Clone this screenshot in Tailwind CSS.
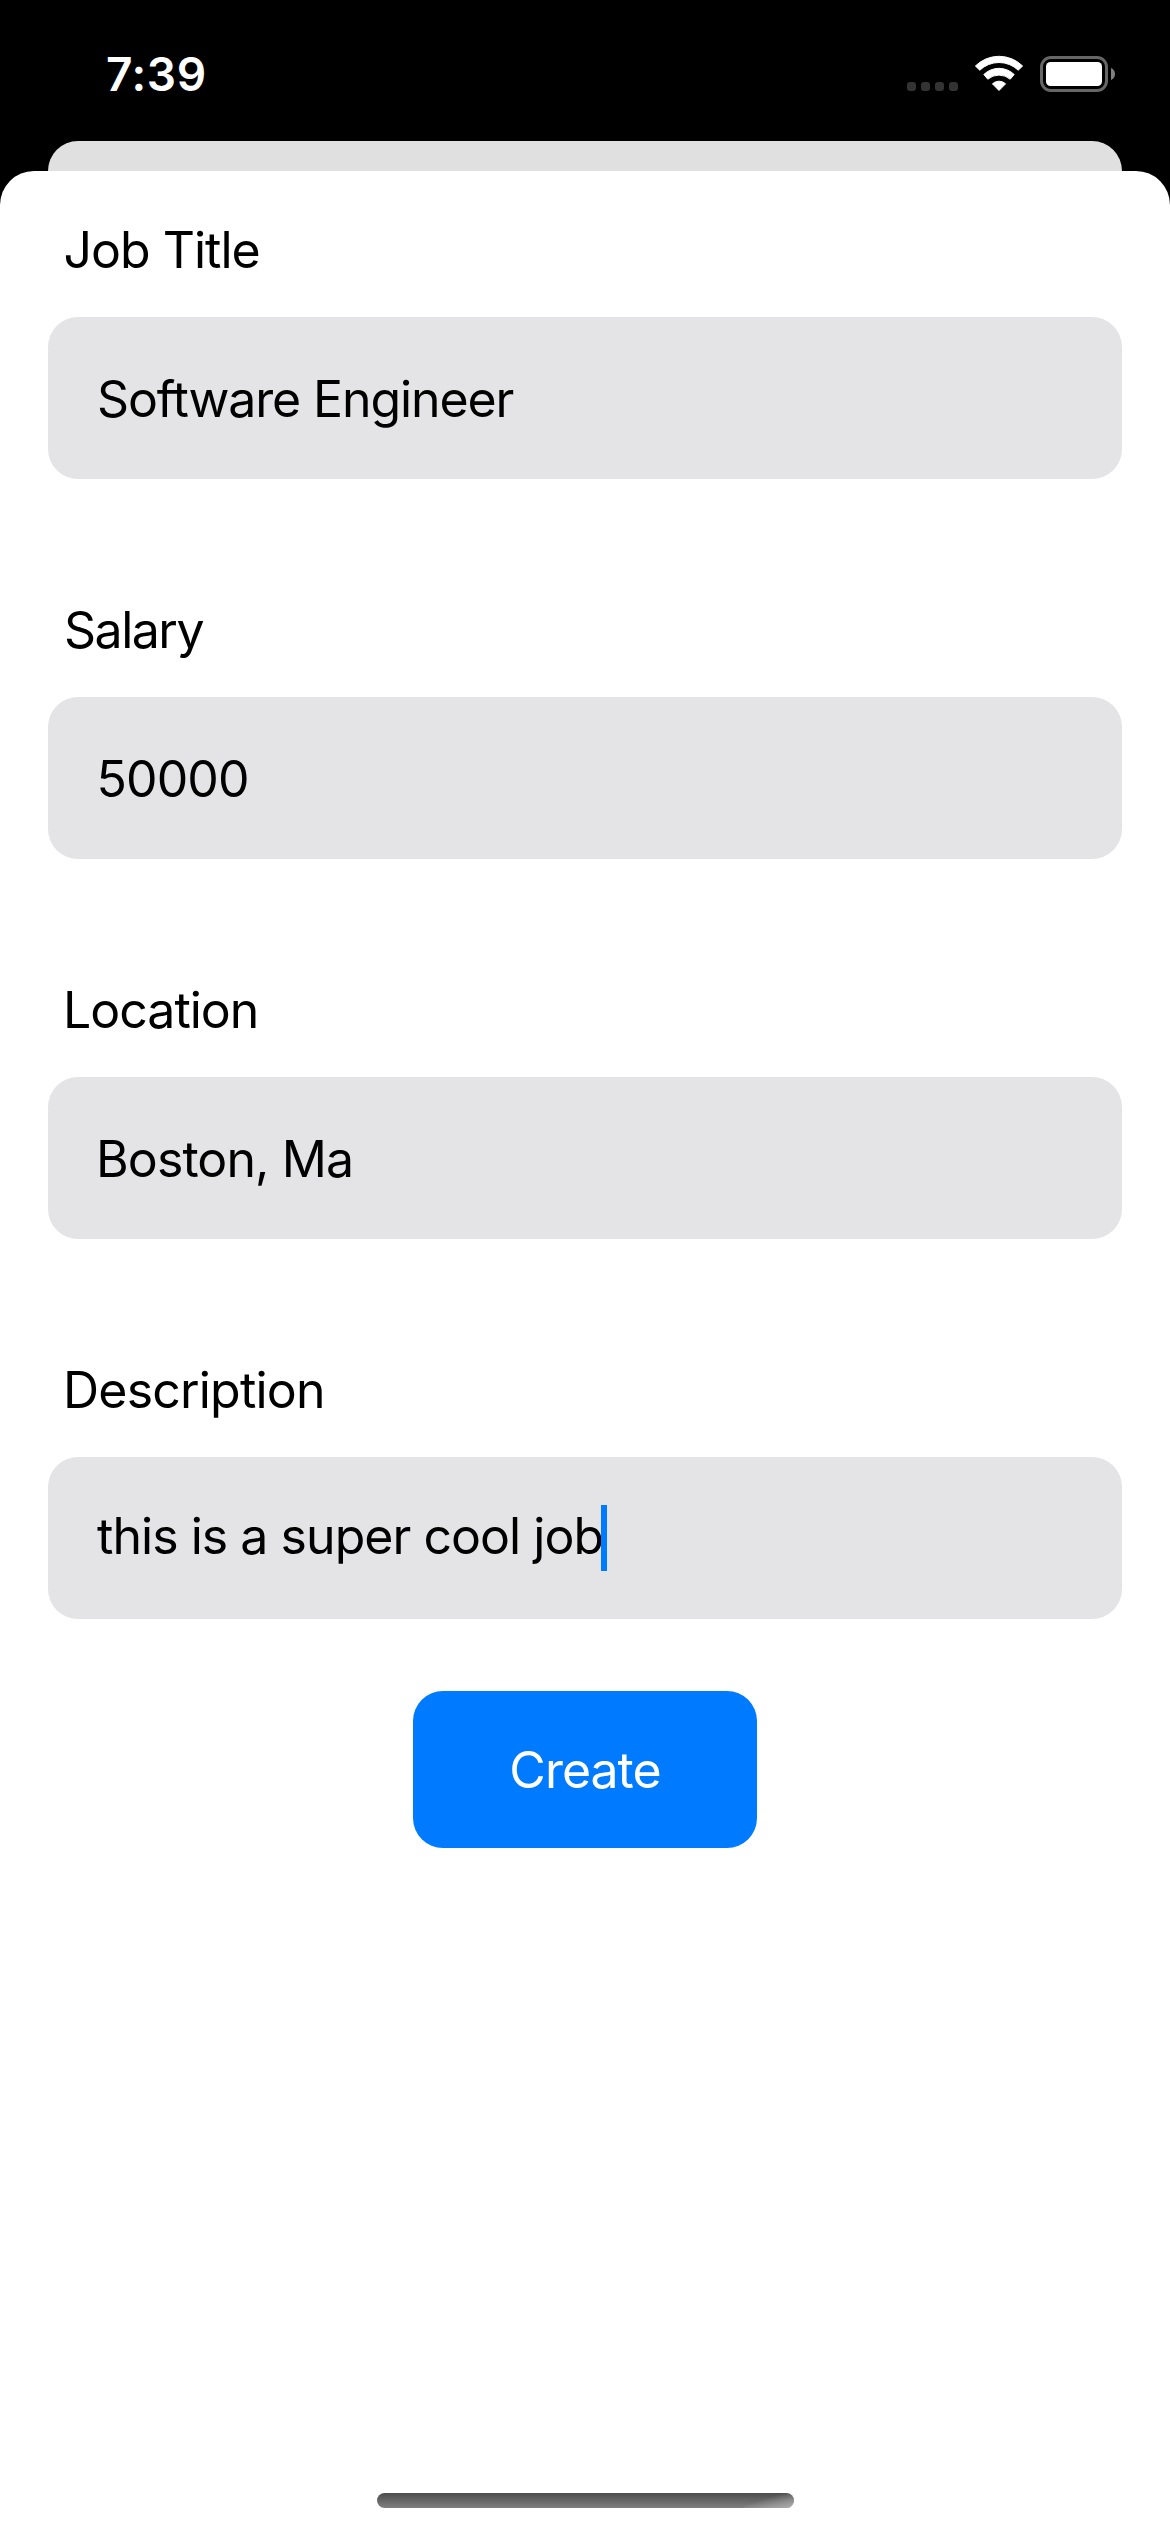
<!DOCTYPE html>
<html lang="en">
<head>
<meta charset="utf-8">
<title>Create Job</title>
<script src="https://cdn.jsdelivr.net/npm/@tailwindcss/browser@4"></script>
</head>
<body class="bg-black">
<div class="flex h-[2532px] w-[1170px] flex-col overflow-hidden bg-black font-['Inter',sans-serif] text-[50px] leading-[60px] tracking-[-1px] text-black">
  <!-- Status bar -->
  <header class="flex h-[141px] shrink-0 items-start justify-between pr-[55px] pl-[106px] text-white">
    <span class="mt-[44px] text-[46px] font-semibold tracking-[0.600px]">7:39</span>
    <div class="mt-[54px] flex">
      <div class="mt-[28px] mr-[16px] flex gap-[5px]">
        <i class="size-[9px] rounded-[3px] bg-[#333333]"></i>
        <i class="size-[9px] rounded-[3px] bg-[#333333]"></i>
        <i class="size-[9px] rounded-[3px] bg-[#333333]"></i>
        <i class="size-[9px] rounded-[3px] bg-[#333333]"></i>
      </div>
      <svg class="mr-[16px]" width="50" height="38" viewBox="0 0 50 38" fill="#fff" stroke="#fff" stroke-width="1" stroke-linejoin="round">
        <path d="M1.4 12A33.500 33.500 0 0 1 48.600 12L44.200 16.200A27.800 27.800 0 0 0 5.800 16.200Z"/>
        <path d="M9.800 20.500A21.800 21.800 0 0 1 40.200 20.500L36.200 25.200A17.300 17.300 0 0 0 13.800 25.200Z"/>
        <path d="M18.400 29.800A9.600 9.600 0 0 1 31.600 29.800L25 36.500Z"/>
      </svg>
      <svg width="75" height="38" viewBox="0 0 75 38">
        <rect x="1.500" y="3.500" width="65" height="33" rx="9.500" fill="none" stroke="#666" stroke-width="3"/>
        <rect x="6" y="8" width="56" height="24" rx="4.500" fill="#fff"/>
        <path d="M71 14Q75 15.800 75 20T71 26Z" fill="#808080"/>
      </svg>
    </div>
  </header>

  <!-- Presenting card peeking out behind the sheet -->
  <div class="mx-[48px] h-[30px] shrink-0 rounded-t-[30px] bg-[#e0e0e0]"></div>

  <!-- Sheet -->
  <main class="flex grow flex-col rounded-t-[34px] bg-white px-[48px] pt-[49px]">
    <form class="flex flex-col">
      <div class="mb-[121px] flex flex-col gap-[37px]">
        <label class="pl-[15.500px]">Job Title</label>
        <div class="h-[162px] rounded-[30px] bg-[#e4e4e6] pt-[52px] pl-[49px] tracking-[-1.120px]">Software Engineer</div>
      </div>
      <div class="mb-[121px] flex flex-col gap-[37px]">
        <label class="pl-[16px] tracking-[-1.500px]">Salary</label>
        <div class="h-[162px] rounded-[30px] bg-[#e4e4e6] pt-[52px] pl-[48.500px] tracking-[-0.900px]">50000</div>
      </div>
      <div class="mb-[121px] flex flex-col gap-[37px]">
        <label class="pl-[15px]">Location</label>
        <div class="h-[162px] rounded-[30px] bg-[#e4e4e6] pt-[52px] pl-[48px] tracking-[-0.900px]">Boston, Ma</div>
      </div>
      <div class="flex flex-col gap-[37px]">
        <label class="pl-[15px] tracking-[-0.800px]">Description</label>
        <div class="flex h-[162px] items-start rounded-[30px] bg-[#e4e4e6] pt-[48px] pl-[49px]">
          <span class="w-[504px] pt-px tracking-[-0.960px] whitespace-nowrap">this is a super cool job</span>
          <span class="h-[66px] w-[6px] bg-[#007aff]"></span>
        </div>
      </div>
      <button type="button" class="mt-[72px] h-[157px] w-[344px] self-center rounded-[30px] bg-[#007aff] text-white">Create</button>
    </form>
    <!-- Home indicator -->
    <div class="mt-auto mb-[24px] h-[15px] w-[417px] self-center overflow-hidden rounded-full bg-linear-to-b from-[#4d4d4d] to-[#808080]">
      <div class="ml-auto h-full w-[50px] bg-linear-to-br from-transparent from-40% to-[#b0b0b0]"></div>
    </div>
  </main>
</div>
</body>
</html>
